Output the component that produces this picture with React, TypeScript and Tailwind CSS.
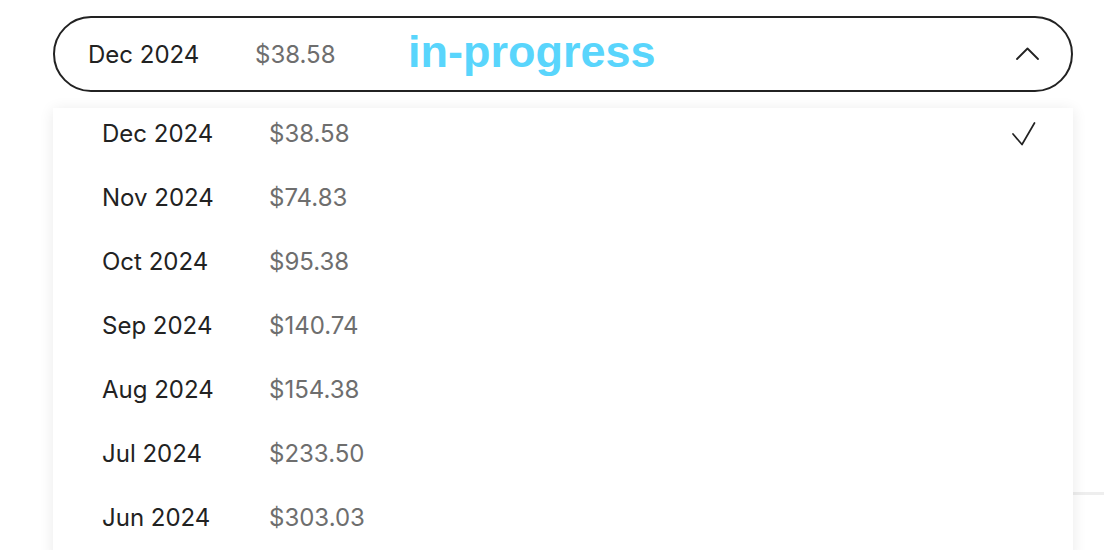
import { useState } from "react";

type Period = {
  label: string;
  amount: string;
};

const periods: Period[] = [
  { label: "Dec 2024", amount: "$38.58" },
  { label: "Nov 2024", amount: "$74.83" },
  { label: "Oct 2024", amount: "$95.38" },
  { label: "Sep 2024", amount: "$140.74" },
  { label: "Aug 2024", amount: "$154.38" },
  { label: "Jul 2024", amount: "$233.50" },
  { label: "Jun 2024", amount: "$303.03" },
];

const ChevronUp = () => (
  <svg width="23" height="13" viewBox="0 0 23 13" fill="none">
    <path d="M1 12L11.5 1.5L22 12" stroke="#222" strokeWidth="1.8" strokeLinecap="round" strokeLinejoin="round" />
  </svg>
);

const Check = () => (
  <svg width="24" height="24" viewBox="0 0 24 24" fill="none">
    <path d="M1 12L10 22.5L22.5 1" stroke="#222" strokeWidth="1.7" strokeLinecap="round" strokeLinejoin="round" />
  </svg>
);

export default function App() {
  const [selected, setSelected] = useState(0);
  const current = periods[selected];

  return (
    <div className="min-h-[550px] bg-white pl-[53px] pr-[31px] pt-4 font-['Inter',sans-serif] text-[#222] overflow-hidden">
      <div className="relative">
        <button className="flex h-[76px] w-full items-center rounded-full border-2 border-[#222] pl-[33px] pr-[32px] text-left">
          <span className="w-[167px] text-[24px] mt-[2px]">{current.label}</span>
          <span className="w-[153px] text-[24px] mt-[2px] text-[#6e6e6e]">{current.amount}</span>
          <span className="font-['Liberation_Sans',sans-serif] text-[45px] font-bold leading-none text-[#59d5fc] -mt-[5px]">
            in-progress
          </span>
          <span className="ml-auto -mt-[2px]">
            <ChevronUp />
          </span>
        </button>

        <div className="absolute left-0 right-0 top-full z-10 mt-4 h-[450px] overflow-hidden bg-white shadow-[0_2px_14px_rgba(0,0,0,0.09)]">
          <ul className="-mt-[6px]">
            {periods.map((p, i) => (
              <li
                key={p.label}
                onClick={() => setSelected(i)}
                className="flex h-16 cursor-pointer items-center pl-[49px] pr-[37px]"
              >
                <span className="w-[167px] text-[24px]">{p.label}</span>
                <span className="text-[24px] text-[#6e6e6e]">{p.amount}</span>
                {i === selected && (
                  <span className="ml-auto">
                    <Check />
                  </span>
                )}
              </li>
            ))}
          </ul>
        </div>
      </div>

      <div className="mt-[400px] ml-[40px] -mr-[31px] border-t-[3px] border-[#eeeeee]" />
    </div>
  );
}
